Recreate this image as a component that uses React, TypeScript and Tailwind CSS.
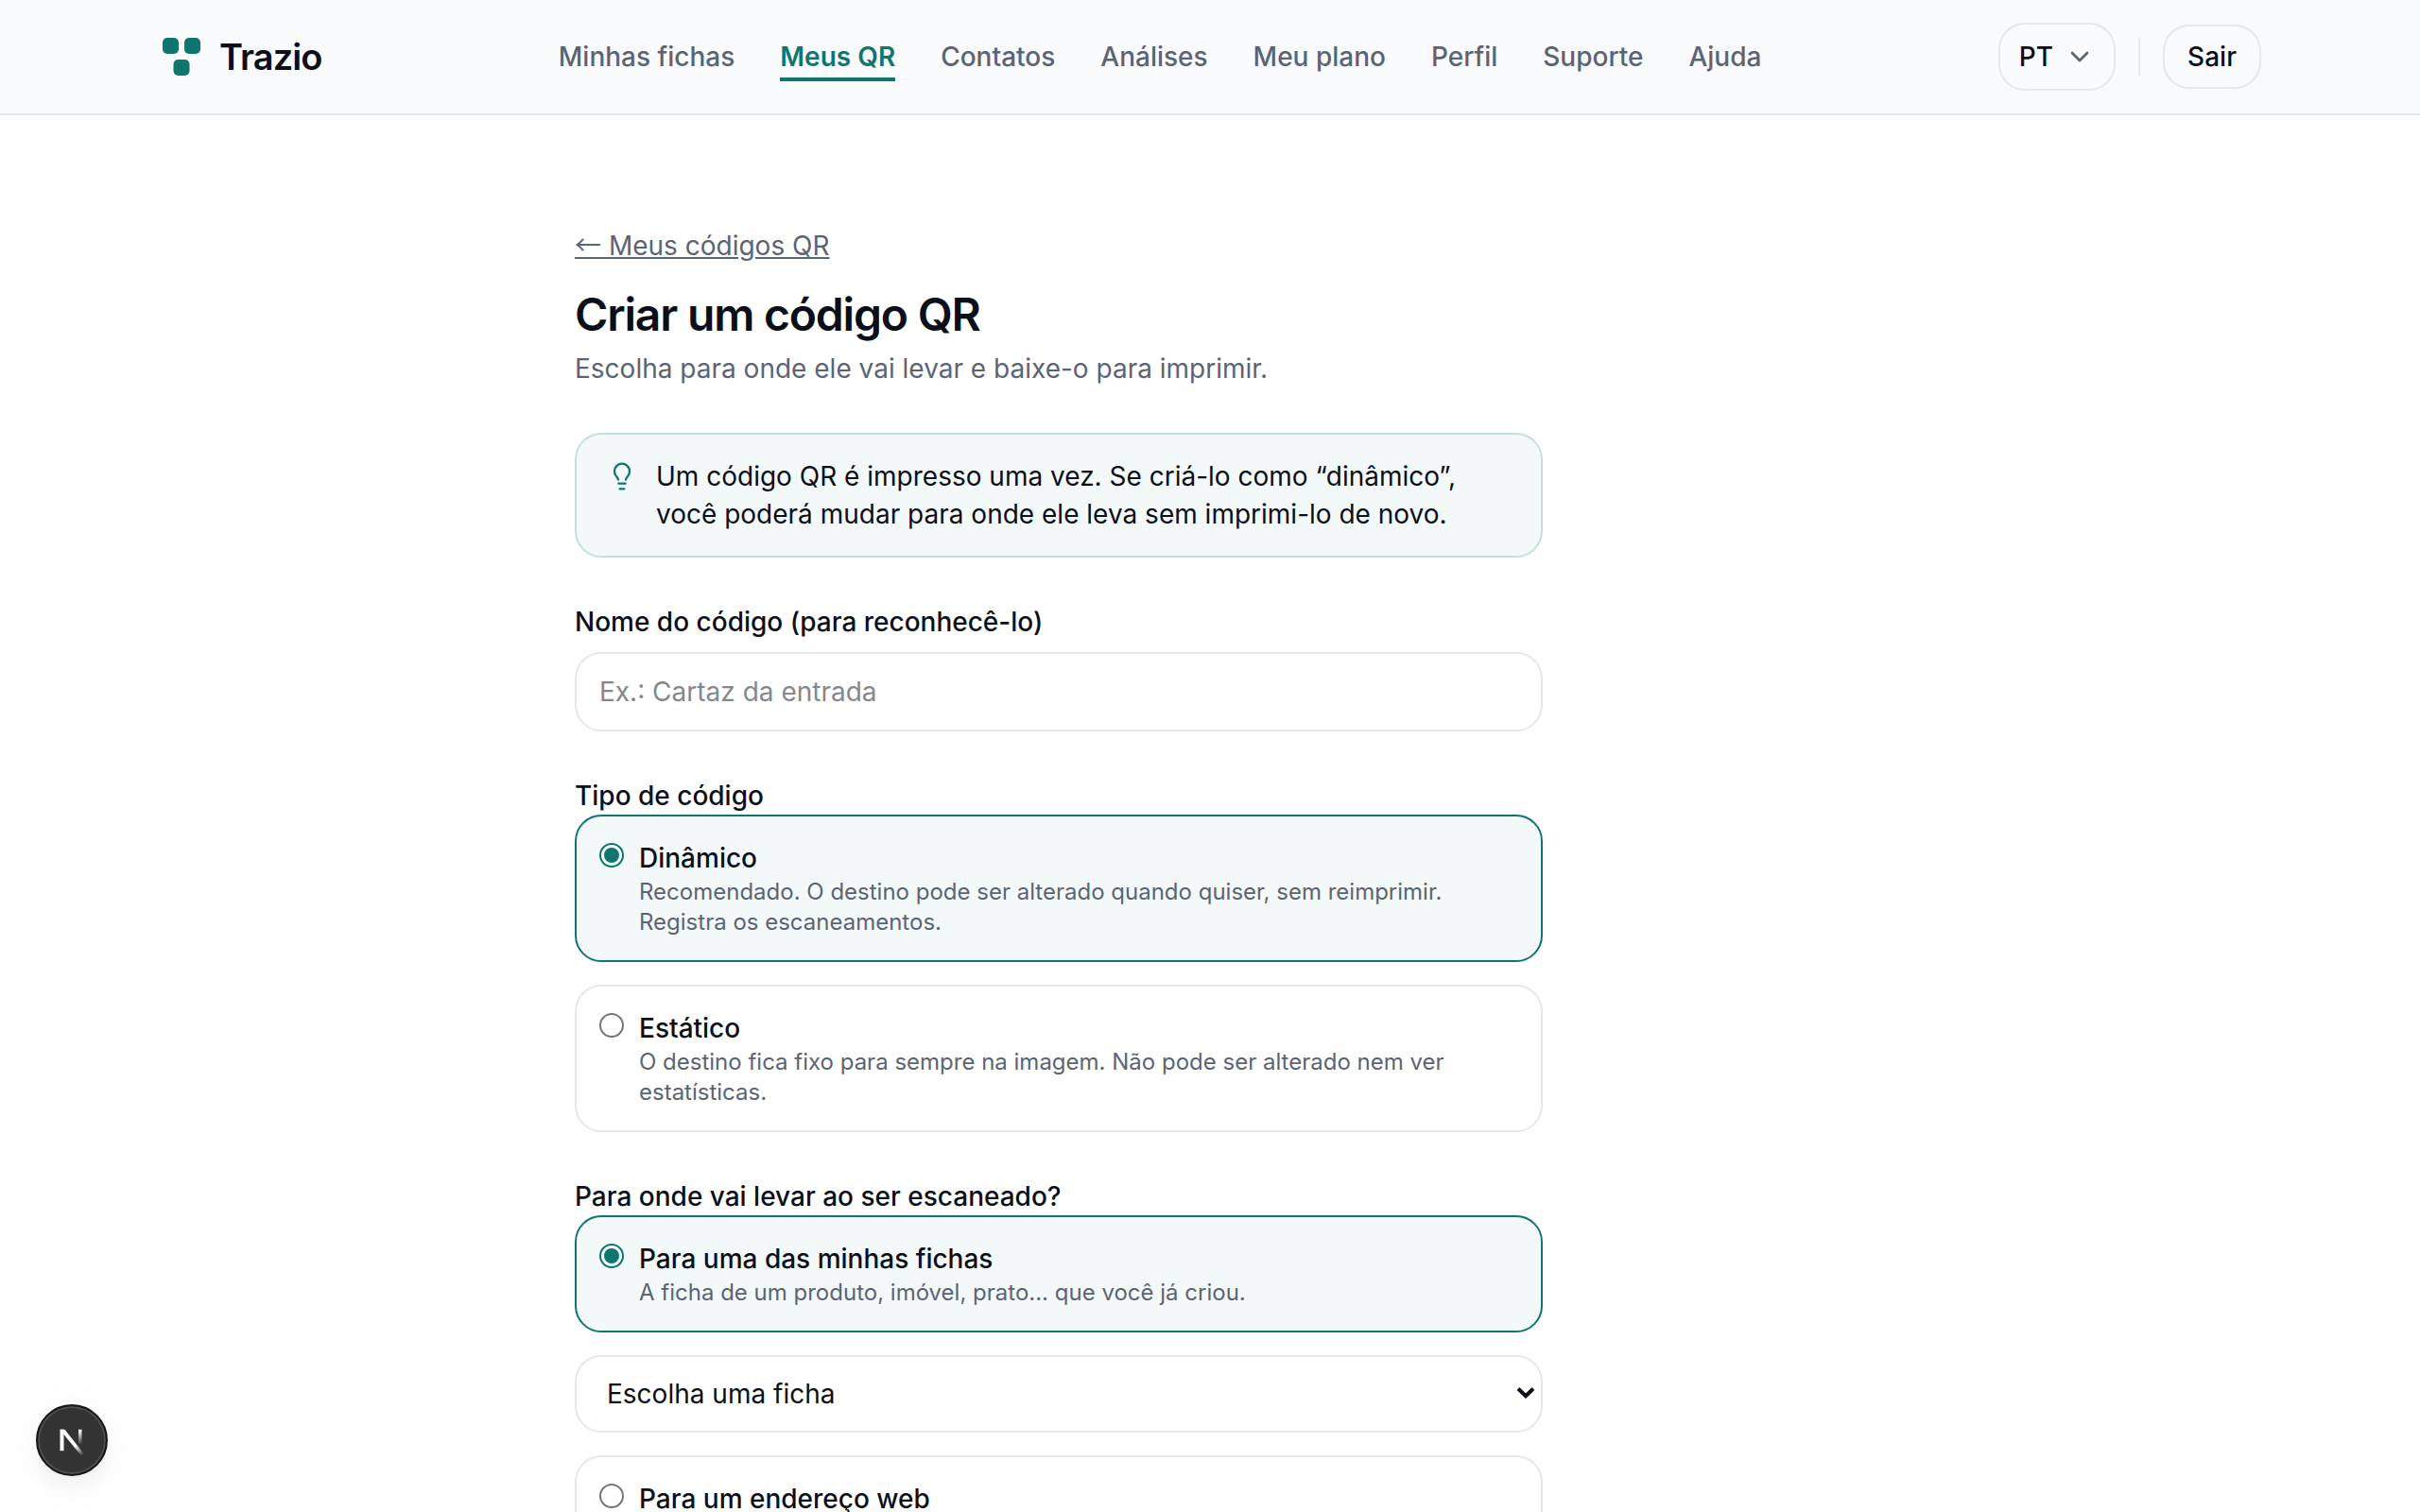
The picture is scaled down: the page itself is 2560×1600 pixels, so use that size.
import React, { useState } from 'react';
import { ChevronDown } from 'lucide-react';

const NAV_ITEMS = ['Minhas fichas', 'Meus QR', 'Contatos', 'Análises', 'Meu plano', 'Perfil', 'Suporte', 'Ajuda'];

const Logo = () => (
  <a href="#" className="flex items-center gap-4">
    <svg width="48" height="48" viewBox="0 0 48 48" fill="#0f766e" aria-hidden="true">
      <rect x="4" y="4" width="17" height="17" rx="5" />
      <rect x="27" y="4" width="17" height="17" rx="5" />
      <rect x="15.5" y="27" width="17" height="17" rx="5" />
    </svg>
    <span className="text-[38px] leading-[48px] font-semibold tracking-tight">Trazio</span>
  </a>
);

const Header = () => (
  <header className="border-b-2 border-[#e5e7eb] bg-[#f8fafc]">
    <div className="mx-auto flex h-[120px] max-w-[2320px] items-center justify-between px-12">
      <Logo />
      <nav className="flex items-center gap-12 font-medium text-[#5b6474]">
        {NAV_ITEMS.map((item) => (
          <a
            key={item}
            href="#"
            className={`border-b-4 pt-1.5 pb-0.5 ${item === 'Meus QR' ? 'border-[#0f766e] font-semibold text-[#0f766e]' : 'border-transparent'}`}>
            {item}
          </a>
        ))}
      </nav>
      <div className="flex items-center gap-6 font-medium">
        <button type="button" className="flex h-[72px] items-center gap-3 rounded-[28px] border-2 border-[#e5e7eb] px-5">
          PT
          <ChevronDown size={32} strokeWidth={2} className="text-[#5b6474]" />
        </button>
        <span className="h-10 w-[2px] bg-[#e5e7eb]" />
        <button type="button" className="h-[68px] rounded-[28px] border-2 border-[#e5e7eb] px-6">
          Sair
        </button>
      </div>
    </div>
  </header>
);

const OptionCard = (props: any) => {
  const { name, value, title, description, selected, onSelect } = props;
  const checked = selected === value;

  return (
    <label
      className={`flex cursor-pointer items-start gap-4 rounded-[28px] border-2 p-6 ${
        checked ? 'border-[#0f766e] bg-[#f3f9f8]' : 'border-[#e5e7eb] bg-white'
      }`}>
      <input
        type="radio"
        name={name}
        value={value}
        checked={checked}
        onChange={() => onSelect(value)}
        className="mt-1 size-[26px] shrink-0 appearance-none rounded-full border-2 border-[#767676] bg-white bg-clip-content p-[3px] checked:border-[#0f766e] checked:bg-[#0f766e]"
      />
      <span>
        <span className="block font-medium">{title}</span>
        <span className="block text-[24px] leading-8 text-[#5b6474]">{description}</span>
      </span>
    </label>
  );
};

const App = () => {
  const [type, setType] = useState('dynamic');
  const [target, setTarget] = useState('card');

  return (
    <div className="h-screen overflow-hidden bg-white font-['Inter',sans-serif] text-[28px] leading-10 text-[#0b0f19]">
      <Header />

      <main className="mx-auto max-w-[1440px] px-12 pt-[118px]">
        <a href="#" className="block w-fit text-[#5b6474] underline">
          <span className="font-['Noto_Sans_CJK_JP',sans-serif] leading-none">←</span> Meus códigos QR
        </a>
        <h1 className="mt-6 text-[48px] leading-[58px] font-semibold tracking-tight">Criar um código QR</h1>
        <p className="mt-2 text-[#5b6474]">Escolha para onde ele vai levar e baixe-o para imprimir.</p>

        <form className="mt-12 flex max-w-[1024px] flex-col gap-12">
          {/* tip */}
          <div className="flex items-start gap-5 rounded-[28px] border-2 border-[#c5e0dc] bg-[#f3f9f8] px-8 py-6">
            <svg
              width="32"
              height="32"
              viewBox="0 0 24 24"
              fill="none"
              stroke="#0f766e"
              strokeWidth="1.7"
              strokeLinecap="round"
              strokeLinejoin="round"
              className="mt-1 shrink-0"
              aria-hidden="true">
              <path d="M9 14.800c0-1.200-.8-1.900-1.600-2.900a6 6 0 1 1 9.200 0c-.8 1-1.600 1.700-1.600 2.900" />
              <path d="M9.200 17.800h5.600M10.200 22h3.600" />
            </svg>
            <p>
              Um código QR é impresso uma vez. Se criá-lo como “dinâmico”, você poderá mudar para onde ele leva sem imprimi-lo de
              novo.
            </p>
          </div>

          <div className="flex flex-col gap-3">
            <label htmlFor="qr-name" className="font-medium">
              Nome do código (para reconhecê-lo)
            </label>
            <input
              id="qr-name"
              type="text"
              placeholder="Ex.: Cartaz da entrada"
              className="h-[84px] w-full rounded-[28px] border-2 border-[#e5e7eb] bg-white px-6 placeholder:text-[#85878c]"
            />
          </div>

          {/* code type */}
          <fieldset>
            <legend className="font-medium">Tipo de código</legend>
            <div className="flex flex-col gap-6">
              <OptionCard
                name="type"
                value="dynamic"
                title="Dinâmico"
                description="Recomendado. O destino pode ser alterado quando quiser, sem reimprimir. Registra os escaneamentos."
                selected={type}
                onSelect={setType}
              />
              <OptionCard
                name="type"
                value="static"
                title="Estático"
                description="O destino fica fixo para sempre na imagem. Não pode ser alterado nem ver estatísticas."
                selected={type}
                onSelect={setType}
              />
            </div>
          </fieldset>

          {/* destination */}
          <fieldset>
            <legend className="font-medium">Para onde vai levar ao ser escaneado?</legend>
            <div className="flex flex-col gap-6">
              <OptionCard
                name="target"
                value="card"
                title="Para uma das minhas fichas"
                description="A ficha de um produto, imóvel, prato... que você já criou."
                selected={target}
                onSelect={setTarget}
              />
              <div className="relative">
                <select
                  aria-label="Escolha uma ficha"
                  className="block h-[82px] w-full appearance-none rounded-[28px] border-2 border-[#e5e7eb] bg-white px-8">
                  <option>Escolha uma ficha</option>
                </select>
                <svg
                  width="20"
                  height="12"
                  viewBox="0 0 20 12"
                  fill="none"
                  stroke="#0b0f19"
                  strokeWidth="4"
                  className="pointer-events-none absolute top-[34px] right-2"
                  aria-hidden="true">
                  <path d="M2 1.500 10 9.200l8-7.700" />
                </svg>
              </div>
              <OptionCard
                name="target"
                value="web"
                title="Para um endereço web"
                selected={target}
                onSelect={setTarget}
              />
            </div>
          </fieldset>
        </form>
      </main>

      {/* dev tools badge */}
      <button
        type="button"
        aria-label="Next.js"
        className="fixed bottom-[38px] left-[38px] flex size-[76px] items-center justify-center rounded-full border-2 border-[#171717] bg-[#333333] shadow-[inset_0_0_0_2px_#4d4d4d,0_16px_32px_-8px_rgba(0,0,0,0.06),0_8px_48px_rgba(0,0,0,0.05)]">
        <svg width="32" height="32" viewBox="0 0 32 32" fill="none" aria-hidden="true">
          <defs>
            <linearGradient id="n-diagonal" x1="14" y1="15" x2="28" y2="32" gradientUnits="userSpaceOnUse">
              <stop offset="0.4" stopColor="white" />
              <stop offset="1" stopColor="white" stopOpacity="0" />
            </linearGradient>
            <linearGradient id="n-stem" x1="24" y1="5" x2="24" y2="21" gradientUnits="userSpaceOnUse">
              <stop stopColor="white" />
              <stop offset="1" stopColor="white" stopOpacity="0" />
            </linearGradient>
          </defs>
          <path d="M3.500 4.700h4v22.500h-4z" fill="white" />
          <path d="M3.500 4.700h5L28.500 30l-3 2L3.500 5z" fill="url(#n-diagonal)" />
          <path d="M23 4.700h3.500v16H23z" fill="url(#n-stem)" />
        </svg>
      </button>
    </div>
  );
};

export default App;
